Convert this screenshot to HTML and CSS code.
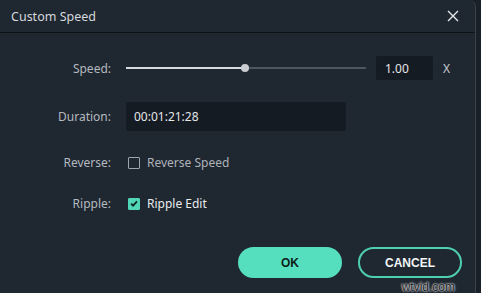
FILE: index.html
```html
<!DOCTYPE html>
<html>
<head>
<meta charset="utf-8" />
<title>Custom Speed</title>
<link rel="stylesheet" href="styles.css">
</head>
<body>
<div class="dialog">
  <div class="titlebar">
    <span class="title">Custom Speed</span>
    <svg class="close" width="12" height="12" viewBox="0 0 12 12"><path d="M1 1L11 11M11 1L1 11" stroke="#e6e8ea" stroke-width="1.4" fill="none"/></svg>
  </div>
  <div class="form">
    <label class="lbl">Speed:</label>
    <div class="ctl speed">
      <div class="slider">
        <div class="fill" style="width:119px"></div>
        <div class="thumb" style="left:115px"></div>
      </div>
      <div class="box small">1.00</div>
      <span class="unit">X</span>
    </div>

    <label class="lbl">Duration:</label>
    <div class="ctl tall">
      <div class="box wide">00:01:21:28</div>
    </div>

    <label class="lbl">Reverse:</label>
    <div class="ctl">
      <span class="check"></span>
      <span class="opt">Reverse Speed</span>
    </div>

    <label class="lbl">Ripple:</label>
    <div class="ctl">
      <span class="check on"><svg width="11" height="11" viewBox="0 0 11 11"><path d="M2.3 5.6L4.5 7.8L8.8 3.2" stroke="#10241f" stroke-width="2" fill="none"/></svg></span>
      <span class="opt white">Ripple Edit</span>
    </div>
  </div>
  <div class="actions">
    <button class="btn ok">OK</button>
    <button class="btn cancel">CANCEL</button>
  </div>
  <span class="mark">wtvid.com</span>
</div>
</body>
</html>
```

FILE: styles.css
```css
html, body {
  margin:0;
  padding:0;
  background:#1a2028;
  width:481px;
  height:293px;
  overflow:hidden;
}

body {
  font-family:'Noto Sans', 'Open Sans', sans-serif;
  font-size:12px;
  color:#b9bec4;
}

.dialog {
  position:relative;
  width:475px;
  height:293px;
  background:#1f2731;
  border-right:1px solid #39414a;
  border-top-right-radius:7px;
}

.titlebar {
  height:32px;
  display:flex;
  align-items:center;
  justify-content:space-between;
  padding:0 16px 0 11px;
  border-bottom:1px solid #0e1318;
}

.title {
  color:#d5d8dc;
  font-size:12.5px;
}

.form {
  display:grid;
  grid-template-columns:103px auto;
  column-gap:15px;
  row-gap:22px;
  padding:23px 0 0 8px;
  align-items:center;
}

.lbl {
  text-align:right;
  color:#b4b9bf;
}

.ctl {
  display:flex;
  align-items:center;
  height:19px;
}

.ctl.speed {
  height:24px;
}

.ctl.tall {
  height:29px;
}

.slider {
  position:relative;
  width:240px;
  height:2px;
  background:#4d555e;
  margin-right:10px;
}

.fill {
  height:2px;
  background:#d7dadd;
}

.thumb {
  position:absolute;
  top:-3px;
  width:8px;
  height:8px;
  border-radius:50%;
  background:#c9cdd1;
}

.box {
  background:#151b22;
  border-radius:2px;
  color:#e4e6e8;
  box-sizing:border-box;
  display:flex;
  align-items:center;
}

.box.small {
  width:57px;
  height:24px;
  padding-left:9px;
}

.box.wide {
  width:220px;
  height:29px;
  padding-left:8px;
}

.unit {
  margin-left:10px;
  color:#c6cacf;
}

.check {
  width:10px;
  height:10px;
  border:1px solid #9ea4ab;
  border-radius:1px;
  margin:0 7px 0 2px;
  display:flex;
  align-items:center;
  justify-content:center;
}

.check.on {
  background:#52d6b8;
  border-color:#52d6b8;
}

.opt {
  color:#aeb3b9;
}

.opt.white {
  color:#e9ebed;
}

.actions {
  display:flex;
  justify-content:flex-end;
  gap:16px;
  padding:34px 13px 0 0;
}

.btn {
  width:104px;
  height:31px;
  border-radius:16px;
  font-family:'Liberation Sans', sans-serif;
  font-weight:bold;
  font-size:12px;
  cursor:pointer;
}

.ok {
  background:#55dfbf;
  border:none;
  color:#0f1d1a;
}

.cancel {
  background:transparent;
  border:2px solid #4fcfb2;
  color:#f2f4f5;
}

.mark {
  position:absolute;
  right:20px;
  bottom:0;
  font-family:'Liberation Sans', sans-serif;
  font-size:12px;
  line-height:12px;
  color:#1b1f24;
  text-shadow:0 0 2px #fff, 0 0 2px #fff;
}
```
